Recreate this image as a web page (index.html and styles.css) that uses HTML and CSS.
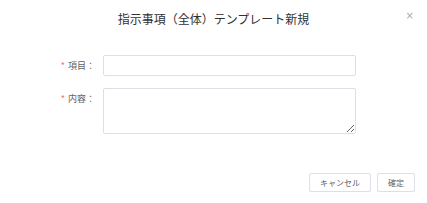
FILE: index.html
```html
<!DOCTYPE html>
<html lang="ja">
<head>
<meta charset="utf-8">
<link rel="stylesheet" href="styles.css">
</head>
<body>
<div class="dialog">
  <div class="header">
    <span class="title">指示事項（全体）テンプレート新規</span>
    <span class="close">×</span>
  </div>
  <div class="form">
    <div class="row">
      <label class="label"><span class="star">*</span>項目：</label>
      <input class="input" type="text">
    </div>
    <div class="row">
      <label class="label"><span class="star">*</span>内容：</label>
      <textarea class="textarea"></textarea>
    </div>
  </div>
  <div class="footer">
    <button class="btn">キャンセル</button>
    <button class="btn">確定</button>
  </div>
</div>
</body>
</html>
```
FILE: styles.css
```css
html, body {
  margin: 0;
  padding: 0;
  background: #fff;
}
body {
  font-family: "Noto Sans CJK JP", "Noto Sans", sans-serif;
  width: 427px;
  height: 203px;
  overflow: hidden;
}
.dialog {
  position: relative;
  width: 427px;
}
.header {
  height: 37px;
  display: flex;
  justify-content: center;
  align-items: center;
}
.title {
  font-size: 12px;
  color: #303133;
  line-height: 16px;
  padding-top: 1px;
}
.close {
  position: absolute;
  right: 13px;
  top: 10px;
  font-size: 10px;
  color: #a8abb2;
  font-family: "DejaVu Sans", sans-serif;
}
.form {
  padding-top: 18px;
  display: flex;
  flex-direction: column;
  gap: 12px;
}
.row {
  display: flex;
  align-items: flex-start;
}
.label {
  width: 95px;
  margin-right: 8px;
  text-align: right;
  font-size: 9px;
  color: #606266;
  line-height: 21px;
}
.star {
  color: #f56c6c;
  margin-right: 3px;
}
.input {
  box-sizing: border-box;
  width: 253px;
  height: 21px;
  border: 1px solid #dcdfe6;
  border-radius: 2px;
  margin: 0;
  padding: 0 6px;
  outline: none;
}
.textarea {
  box-sizing: border-box;
  width: 253px;
  height: 46px;
  border: 1px solid #dcdfe6;
  border-radius: 2px;
  margin: 0;
  padding: 3px 6px;
  resize: vertical;
  outline: none;
  font-family: inherit;
}
.footer {
  display: flex;
  justify-content: flex-end;
  gap: 6px;
  padding-right: 12px;
  margin-top: 39px;
}
.btn {
  box-sizing: border-box;
  height: 19px;
  padding: 0 10px;
  background: #fff;
  border: 1px solid #dcdfe6;
  border-radius: 2px;
  font-family: inherit;
  font-size: 8px;
  color: #606266;
  line-height: 17px;
}
```
